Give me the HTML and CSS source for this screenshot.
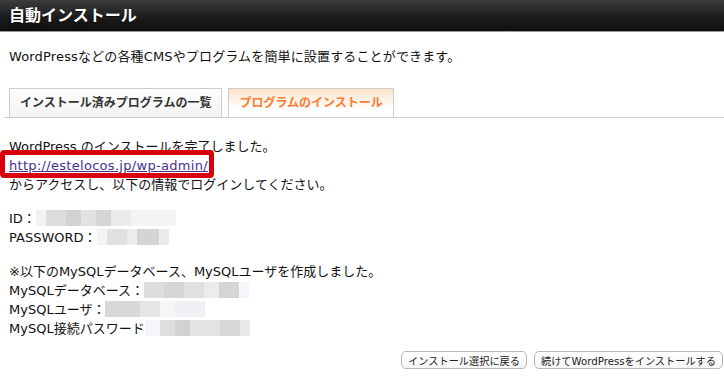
FILE: index.html
```html
<!DOCTYPE html>
<html>
<head>
    <title>自動インストール</title>
    <meta charset="UTF-8">
    <link rel="stylesheet" href="styles.css">
</head>
<body>
    <div class="title-bar">
        <h1>自動インストール</h1>
    </div>
    <div class="content">
        <p class="lead">WordPressなどの各種CMSやプログラムを簡単に設置することができます。</p>

        <ul class="tabs">
            <li class="tab">インストール済みプログラムの一覧</li>
            <li class="tab active">プログラムのインストール</li>
        </ul>

        <div class="result">
            <p>
                WordPress のインストールを完了しました。<br>
                <span class="link-box"><a href="#">http://estelocos.jp/wp-admin/</a></span><br>
                からアクセスし、以下の情報でログインしてください。
            </p>
            <p>
                ID：<span class="mosaic mosaic-id"></span><br>
                PASSWORD：<span class="mosaic mosaic-pass"></span>
            </p>
            <p>
                ※以下のMySQLデータベース、MySQLユーザを作成しました。<br>
                MySQLデータベース：<span class="mosaic mosaic-db"></span><br>
                MySQLユーザ：<span class="mosaic mosaic-user"></span><br>
                MySQL接続パスワード<span class="mosaic mosaic-dbpass"></span>
            </p>
        </div>

        <div class="actions">
            <button type="button">インストール選択に戻る</button>
            <button type="button">続けてWordPressをインストールする</button>
        </div>
    </div>
</body>
</html>
```

FILE: styles.css
```css
body {
    margin: 0;
    font-family: "DejaVu Sans", "Noto Sans CJK JP", sans-serif;
    font-size: 13px;
    color: #111;
    background-color: white;
    width: 724px;
    height: 390px;
    overflow: hidden;
}
.title-bar {
    height: 31px;
    background: linear-gradient(#3c3c3c, #1a1a1a 60%, #0e0e0e);
    border-bottom: 1px solid #999;
}
h1 {
    margin: 0;
    padding: 0 9px;
    line-height: 31px;
    font-size: 16px;
    font-weight: bold;
    color: white;
    text-shadow: 0 1px 1px rgba(0,0,0,0.6);
}
.content {
    padding: 0 0 0 4px;
}
.lead {
    margin: 15px 0 0 5px;
    line-height: 19px;
    letter-spacing: 0.15px;
}
.tabs {
    list-style: none;
    display: flex;
    gap: 6px;
    margin: 22px 0 0 0;
    padding: 0 0 0 5px;
    border-bottom: 1px solid #ccc;
}
.tab {
    height: 28px;
    line-height: 29px;
    padding: 0 10px;
    border: 1px solid #ccc;
    border-bottom: none;
    font-size: 12px;
    font-weight: bold;
    color: #333;
    background: linear-gradient(#fff, #f2f2f2);
}
.tab.active {
    color: #ff7a2e;
    background: linear-gradient(#fde3c8, #fff 70%);
}
.result {
    padding: 19px 0 0 5px;
    line-height: 19px;
}
.result p {
    margin: 0 0 15px 0;
}
.result a {
    color: #46308e;
    letter-spacing: 0.3px;
}
.link-box {
    position: relative;
    display: inline-block;
}
.link-box::after {
    content: "";
    position: absolute;
    left: -9px;
    top: -6px;
    right: -6px;
    bottom: -3px;
    border: 5px solid #d9000d;
    border-radius: 4px;
}
.mosaic {
    display: inline-block;
    height: 16px;
    vertical-align: -3px;
}
.mosaic-id {
    width: 140px;
    background: linear-gradient(90deg, #f2f2f2 0 10px, #dcdcdc 10px 30px, #d2d2d2 30px 45px, #e2e2e2 45px 60px, #d6d6d6 60px 75px, #ebebeb 75px 95px, #f4f4f4 95px 140px);
}
.mosaic-pass {
    width: 72px;
    background: linear-gradient(90deg, #f3f3f3 0 10px, #e0e0e0 10px 30px, #ececec 30px 40px, #d4d4d4 40px 62px, #ebebeb 62px 72px);
}
.mosaic-db {
    width: 105px;
    background: linear-gradient(90deg, #ddd 0 20px, #d6d6d6 20px 40px, #e0e0e0 40px 60px, #ececec 60px 75px, #d5d5d5 75px 95px, #f4f6fa 95px 105px);
}
.mosaic-user {
    width: 100px;
    background: linear-gradient(90deg, #d8d8d8 0 35px, #e6e6e6 35px 55px, #f6f6f6 55px 70px, #eef0f4 70px 100px);
}
.mosaic-dbpass {
    width: 105px;
    background: linear-gradient(90deg, #f5f6fa 0 15px, #dedede 15px 30px, #d2d2d2 30px 45px, #e4e4e4 45px 75px, #d8d8d8 75px 95px, #e8e8e8 95px 105px);
}
.actions {
    display: flex;
    justify-content: flex-end;
    gap: 7px;
    margin-top: -2px;
    padding-right: 1px;
}
button {
    font-family: "DejaVu Sans", "Noto Sans CJK JP", sans-serif;
    font-size: 10.2px;
    color: #222;
    height: 18px;
    padding: 0 6px;
    border: 1px solid #b8b8b8;
    border-radius: 5px;
    background: linear-gradient(#fff, #f6f6f6);
}
```
